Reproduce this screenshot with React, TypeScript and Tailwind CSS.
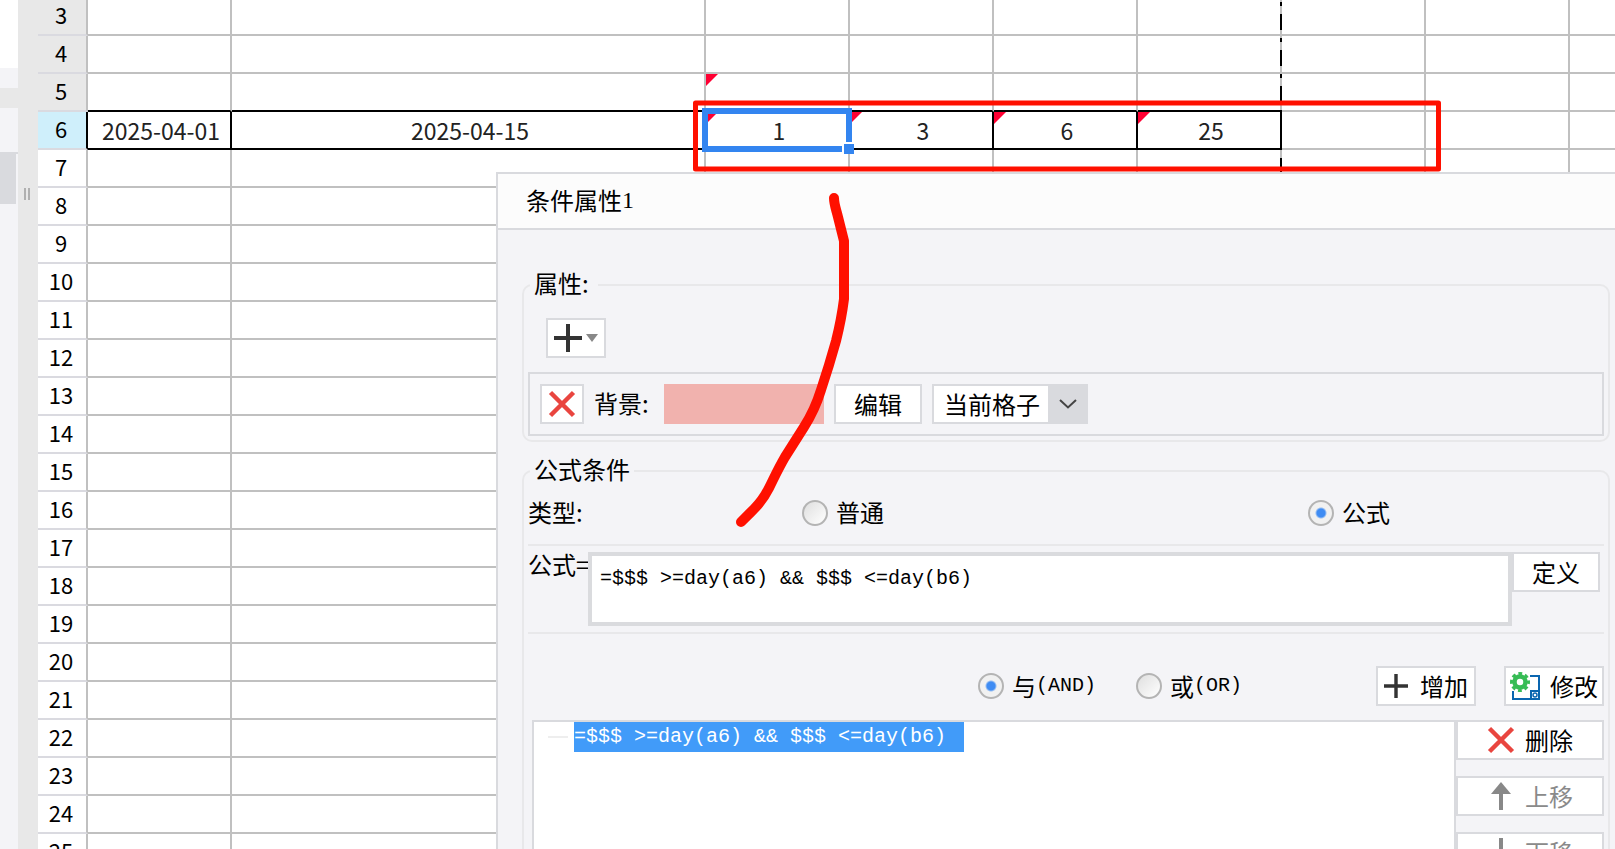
import { useState } from "react";

const FORMULA = "=$$$ >=day(a6) && $$$ <=day(b6)";
const ROWS = Array.from({ length: 23 }, (_, i) => i + 3);
const COLS = ["A", "B", "C", "D", "E", "F", "G", "H", "I"];

const VALUES: Record<string, string> = {
  A6: "2025-04-01",
  B6: "2025-04-15",
  C6: "1",
  D6: "3",
  E6: "6",
  F6: "25",
};
const MARKED = ["C5", "C6", "D6", "E6", "F6"];

const BUTTON = "flex h-10 shrink-0 items-center justify-center border-2 border-[#d9dade] bg-white";
const RADIO =
  "size-[26px] shrink-0 appearance-none rounded-full border-2 border-[#b4b4b4] bg-linear-to-br from-[#dfdfdf] to-white checked:bg-[radial-gradient(circle,#3f8cf3_0_4px,#f1f1f1_6px)]";

function PlusIcon({ size }: { size: number }) {
  return (
    <svg width={size} height={size} viewBox="0 0 28 28" className="shrink-0">
      <path d="M14 0v28M0 14h28" stroke="#333" strokeWidth="4" />
    </svg>
  );
}

function CrossIcon() {
  return (
    <svg width="28" height="28" viewBox="0 0 28 28" className="shrink-0">
      <path d="M2.500 2.500L25.500 25.500M25.500 2.500L2.500 25.500" stroke="#e9453f" strokeWidth="4.500" />
    </svg>
  );
}

function ArrowIcon({ down = false }: { down?: boolean }) {
  return (
    <svg width="28" height="28" viewBox="0 0 28 28" className={`shrink-0 ${down ? "rotate-180" : ""}`}>
      <path d="M14 8V28" stroke="#888" strokeWidth="4" />
      <path d="M14 0L24 12H4Z" fill="#888" />
    </svg>
  );
}

function EditIcon() {
  return (
    <svg width="32" height="30" viewBox="0 0 32 30" className="shrink-0">
      <path d="M20 5H29V28H3V20" fill="none" stroke="#0a66b0" strokeWidth="2" />
      <path d="M21 28V20H29" fill="none" stroke="#0a66b0" strokeWidth="2" />
      <circle cx="25" cy="24" r="2" fill="none" stroke="#0a66b0" strokeWidth="1.500" />
      <circle cx="10" cy="11" r="5.500" fill="none" stroke="#37bc55" strokeWidth="4.500" />
      <circle cx="10" cy="11" r="8.500" fill="none" stroke="#37bc55" strokeWidth="3" strokeDasharray="3.800 2.876" strokeDashoffset="1.900" />
    </svg>
  );
}

function Sheet() {
  return (
    <table className="-mt-0.5 w-full table-fixed border-separate border-spacing-0 bg-white">
      <colgroup>
        <col className="w-[50px]" />
        <col className="w-[144px]" />
        <col className="w-[474px]" />
        <col className="w-[144px]" />
        <col className="w-[144px]" />
        <col className="w-[144px]" />
        <col className="w-[144px]" />
        <col className="w-[144px]" />
        <col className="w-[144px]" />
        <col />
      </colgroup>
      <tbody>
        {ROWS.map((row) => (
          <tr key={row} className="h-[38px]">
            <th
              className={`border-r-2 border-b-2 border-b-[#dadae0] p-0 pr-0.5 pb-1 text-[22px] leading-6 font-normal ${
                row === 6 ? "border-r-black bg-[#cfeffb]" : row < 6 ? "border-r-[#c0c0c0] bg-[#e8e8e8]" : "border-r-[#c0c0c0]"
              }`}
            >
              {row}
            </th>
            {COLS.map((col, i) => {
              const id = `${col}${row}`;
              const boxed = i < 6;
              return (
                <td
                  key={id}
                  className={`relative border-r-2 border-b-2 p-0 pl-1 text-center text-[23px] leading-6 text-[#222] last:border-r-0 ${
                    boxed && row === 6 ? "border-r-black" : "border-r-[#c0c0c0]"
                  } ${boxed && (row === 5 || row === 6) ? "border-b-black" : "border-b-[#c0c0c0]"}`}
                >
                  {VALUES[id]}
                  {MARKED.includes(id) && (
                    <svg width="12" height="12" className="absolute top-0 left-0">
                      <path d="M0 0H12L0 12Z" fill="#ff0033" />
                    </svg>
                  )}
                  {id === "C6" && (
                    <>
                      <span className="absolute -inset-1 z-10 border-6 border-[#3385f0]" />
                      <span className="absolute -right-1.5 -bottom-1.5 z-10 size-3 border-t-2 border-l-2 border-white bg-[#3385f0]" />
                    </>
                  )}
                </td>
              );
            })}
          </tr>
        ))}
      </tbody>
    </table>
  );
}

function ConditionDialog() {
  const [scope, setScope] = useState("当前格子");
  const [kind, setKind] = useState("formula");
  const [join, setJoin] = useState("and");
  const [formula, setFormula] = useState(FORMULA);

  return (
    <section className="absolute top-[172px] right-0 bottom-0 left-[496px] z-20 overflow-hidden border-t-2 border-l-2 border-[#d9dade] bg-[#f4f4f7] text-2xl leading-7">
      <h1 className="flex h-14 items-center border-b-2 border-[#d9dade] bg-[#fcfcfc] pb-0.5 pl-7">
        条件属性<span className="font-['Liberation_Serif']">1</span>
      </h1>

      <div className="pt-[41px] pr-[5px] pl-6">
        <fieldset className="rounded-[10px] border-2 border-[#e8e8ea] px-1 pb-1">
          <legend className="ml-0.5 h-7 w-[68px] pl-1 leading-6">属性:</legend>
          <button aria-label="添加属性" className={`${BUTTON} mt-[19px] ml-[18px] w-[60px] gap-1`}>
            <PlusIcon size={28} />
            <svg width="12" height="8" viewBox="0 0 12 8">
              <path d="M0 0H12L6 8Z" fill="#888" />
            </svg>
          </button>

          <div className="mt-3.5 flex h-16 items-center border-2 border-[#d9dade] pl-2.5">
            <button aria-label="移除背景" className={`${BUTTON} w-11`}>
              <CrossIcon />
            </button>
            <span className="w-20 pb-0.5 pl-2.5">背景:</span>
            <span className="h-10 w-40 bg-[#f1b2ae]" />
            <button className={`${BUTTON} ml-2.5 w-[88px]`}>编辑</button>
            <div className="relative ml-2.5">
              <select
                aria-label="应用范围"
                value={scope}
                onChange={(e) => setScope(e.target.value)}
                className="h-10 w-[156px] appearance-none border-2 border-[#d9dade] bg-white pl-2.5"
              >
                <option>当前格子</option>
                <option>当前行</option>
                <option>当前列</option>
              </select>
              <span className="pointer-events-none absolute inset-y-0 right-0 flex w-10 items-center justify-center bg-[#d9dade]">
                <svg width="18" height="10" viewBox="0 0 18 10">
                  <path d="M1 1L9 8.500L17 1" fill="none" stroke="#444" strokeWidth="2" />
                </svg>
              </span>
            </div>
          </div>
        </fieldset>

        <fieldset className="mt-[15px] rounded-[10px] border-2 border-[#e8e8ea] px-1 pb-1">
          <legend className="ml-0.5 h-7 px-1 leading-6">公式条件</legend>
          <div className="grid h-[59px] grid-cols-[274px_506px_1fr] items-center pb-[3px]">
            <span className="pb-0.5">类型:</span>
            <label className="flex items-center gap-2">
              <input type="radio" name="kind" className={RADIO} checked={kind === "plain"} onChange={() => setKind("plain")} />
              <span className="pb-0.5">普通</span>
            </label>
            <label className="flex items-center gap-2">
              <input type="radio" name="kind" className={RADIO} checked={kind === "formula"} onChange={() => setKind("formula")} />
              <span className="pb-0.5">公式</span>
            </label>
          </div>

          <div className="flex items-start border-y-2 border-[#e8e8ea] py-1.5">
            <label htmlFor="formula" className="w-[60px] shrink-0 leading-6 whitespace-nowrap">
              公式=
            </label>
            <textarea
              id="formula"
              value={formula}
              spellCheck={false}
              onChange={(e) => setFormula(e.target.value)}
              className="block h-[74px] min-w-0 flex-1 resize-none border-4 border-[#dadbde] bg-white px-2 py-2 font-['Liberation_Mono'] text-xl leading-[30px] outline-none"
            />
            <button className={`${BUTTON} mr-1 w-[88px]`}>定义</button>
          </div>

          <div className="mt-8 flex items-center justify-end">
            <label className="flex w-[158px] items-center gap-2">
              <input type="radio" name="join" className={RADIO} checked={join === "and"} onChange={() => setJoin("and")} />
              <span className="flex">
                与<span className="font-['Liberation_Mono'] text-xl leading-7">(AND)</span>
              </span>
            </label>
            <label className="flex w-60 items-center gap-2">
              <input type="radio" name="join" className={RADIO} checked={join === "or"} onChange={() => setJoin("or")} />
              <span className="flex">
                或<span className="font-['Liberation_Mono'] text-xl leading-7">(OR)</span>
              </span>
            </label>
            <button className={`${BUTTON} w-[100px] gap-3`}>
              <PlusIcon size={24} />
              增加
            </button>
            <button className={`${BUTTON} ml-7 w-[100px] gap-2`}>
              <EditIcon />
              修改
            </button>
          </div>

          <div className="mt-3.5 ml-1 flex">
            <ul className="h-60 flex-1 border-2 border-[#d9dade] bg-white pl-3.5">
              <li className="flex items-center">
                <span className="mr-1.5 h-0.5 w-5 bg-[#eeeeee]" />
                <span className="h-[30px] w-[390px] bg-[#419bf9] font-['Liberation_Mono'] text-xl leading-[30px] whitespace-pre text-white">
                  {FORMULA}
                </span>
              </li>
            </ul>
            <div className="flex w-[148px] flex-col gap-4">
              <button className={`${BUTTON} gap-2.5`}>
                <CrossIcon />
                删除
              </button>
              <button disabled className={`${BUTTON} gap-2.5 text-[#8a8a8a]`}>
                <ArrowIcon />
                上移
              </button>
              <button disabled className={`${BUTTON} gap-2.5 text-[#8a8a8a]`}>
                <ArrowIcon down />
                下移
              </button>
            </div>
          </div>
        </fieldset>
      </div>
    </section>
  );
}

export default function App() {
  return (
    <div className="relative flex h-screen overflow-hidden bg-white font-['Noto_Sans_CJK_SC',sans-serif] text-black">
      {/* Edge of the side panel */}
      <aside className="flex w-[18px] shrink-0 flex-col bg-[#f4f4f7]">
        <div className="h-[68px] bg-white" />
        <div className="mt-5 h-5 bg-[#e8e8e8]" />
        <div className="mt-11 h-[52px] border-t-2 border-[#d9dade]">
          <div className="h-full w-4 bg-[#d9dade]" />
        </div>
      </aside>
      <div className="flex w-5 shrink-0 justify-center gap-0.5 bg-[#e8e8e8] pt-[188px] pr-0.5">
        <span className="h-3 w-0.5 bg-[#b0b0b0]" />
        <span className="h-3 w-0.5 bg-[#b0b0b0]" />
      </div>

      <main className="min-w-0 flex-1">
        <Sheet />
      </main>

      {/* Page break line */}
      <svg width="2" height="172" className="absolute top-0 left-[1280px]">
        <path d="M1 -22V172" stroke="#000" strokeWidth="2" strokeDasharray="16 8 4 8" />
      </svg>

      <ConditionDialog />

      {/* Hand-drawn marks */}
      <svg width="760" height="440" viewBox="0 0 760 440" className="pointer-events-none absolute top-[95px] left-[690px] z-30">
        <g fill="none" stroke="#ff1000" strokeLinejoin="round" strokeLinecap="round">
          <rect x="5.500" y="8" width="743" height="66" strokeWidth="5" />
          <path
            d="M144 103C144 109 146 114 148 122L154 146V204C152 220 149 234 146 246C141 264 136 280 131 295C127 308 121 321 114 332L95 362C88 374 84 383 79 393C74 403 70 408 64 414C60 418 58 420 51 427"
            strokeWidth="10"
          />
        </g>
      </svg>
    </div>
  );
}
